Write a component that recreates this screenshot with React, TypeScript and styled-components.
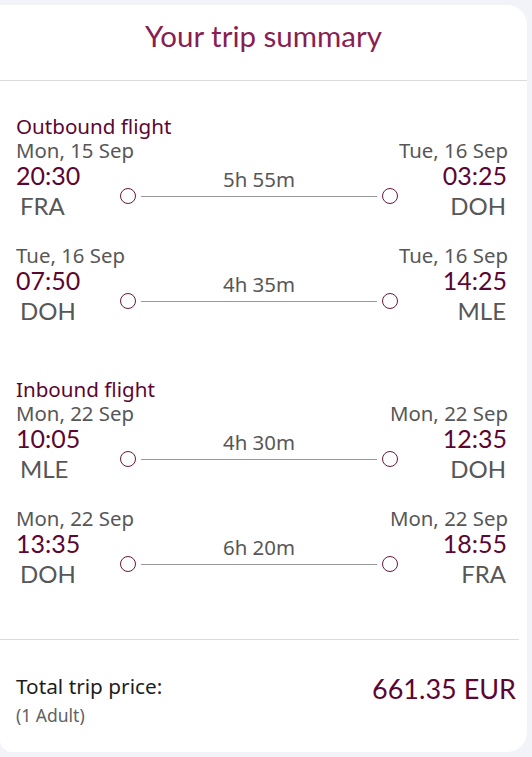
import React, { Fragment } from 'react';
import styled, { createGlobalStyle } from 'styled-components';

const GlobalStyle = createGlobalStyle`
  html, body {
    margin: 0;
    padding: 0;
    background: #f2f3f9;
  }
  body {
    font-family: "Noto Sans", "Open Sans", sans-serif;
  }
`;

const Card = styled.div`
  width: 527px;
  height: 747px;
  margin: 5px 5px 5px 0;
  background: #ffffff;
  border-radius: 0 20px 20px 12px;
  box-sizing: border-box;
  display: flex;
  flex-direction: column;
`;

const Header = styled.div`
  padding: 16px 0 29px;
  text-align: center;
  border-bottom: 1px solid #dcdcdc;
`;

const Title = styled.h1`
  margin: 0;
  font-family: "Lato", sans-serif;
  font-weight: 400;
  font-size: 29.5px;
  line-height: 30px;
  color: #8a1d53;
`;

const Flights = styled.div`
  padding: 34px 11px 48px 16px;
  border-bottom: 1px solid #dcdcdc;
  margin-right: 8px;
`;

const Direction = styled.div<{ $first?: boolean }>`
  margin-top: ${props => (props.$first ? '0' : '50px')};
`;

const DirectionLabel = styled.div`
  font-size: 20.6px;
  line-height: 26px;
  color: #5c0632;
  margin-top: -2px;
`;

const Segment = styled.div<{ $first?: boolean }>`
  margin-top: ${props => (props.$first ? '0' : '21px')};
`;

const DateRow = styled.div`
  display: flex;
  justify-content: space-between;
  font-size: 20.4px;
  line-height: 22px;
  color: #575757;
`;

const MainRow = styled.div`
  display: flex;
  align-items: flex-start;
`;

const Stop = styled.div<{ $right?: boolean }>`
  width: ${props => (props.$right ? '110px' : '104px')};
  display: flex;
  flex-direction: column;
  align-items: ${props => (props.$right ? 'flex-end' : 'flex-start')};
`;

const Time = styled.div<{ $right?: boolean }>`
  font-family: "Lato", sans-serif;
  font-size: 25px;
  line-height: 28px;
  color: #5c0632;
  padding-right: ${props => (props.$right ? '1px' : '0')};
`;

const Code = styled.div<{ $right?: boolean }>`
  font-family: "Lato", sans-serif;
  font-size: 24px;
  line-height: 34px;
  color: #575757;
  padding-left: ${props => (props.$right ? '0' : '4px')};
  padding-right: ${props => (props.$right ? '2px' : '0')};
`;

const Track = styled.div`
  flex: 1;
  margin-top: 10px;
  display: flex;
  flex-direction: column;
  align-items: center;
`;

const Duration = styled.div`
  font-size: 20.4px;
  line-height: 16px;
  color: #575757;
`;

const Line = styled.div`
  width: 100%;
  display: flex;
  align-items: center;
  height: 18px;
`;

const Dot = styled.div`
  width: 14px;
  height: 14px;
  border: 1.5px solid #6b173f;
  border-radius: 50%;
  background: #fff;
  flex: none;
`;

const Rule = styled.div`
  flex: 1;
  height: 1px;
  background: #999999;
  margin: 0 5px;
`;

const Total = styled.div`
  display: flex;
  justify-content: space-between;
  align-items: flex-start;
  padding: 34px 11px 0 16px;
`;

const TotalLabel = styled.div`
  font-size: 20.8px;
  line-height: 24px;
  color: #1e1e1e;
`;

const Pax = styled.div`
  font-size: 17.5px;
  line-height: 22px;
  color: #626262;
  margin-top: 6px;
`;

const Price = styled.div`
  font-family: "Lato", sans-serif;
  font-size: 27px;
  line-height: 30px;
  color: #5c0632;
`;

type Seg = {
  depDate: string;
  depTime: string;
  from: string;
  arrDate: string;
  arrTime: string;
  to: string;
  duration: string;
};

const Trips: { label: string; segments: Seg[] }[] = [
  {
    label: 'Outbound flight',
    segments: [
      { depDate: 'Mon, 15 Sep', depTime: '20:30', from: 'FRA', arrDate: 'Tue, 16 Sep', arrTime: '03:25', to: 'DOH', duration: '5h 55m' },
      { depDate: 'Tue, 16 Sep', depTime: '07:50', from: 'DOH', arrDate: 'Tue, 16 Sep', arrTime: '14:25', to: 'MLE', duration: '4h 35m' },
    ],
  },
  {
    label: 'Inbound flight',
    segments: [
      { depDate: 'Mon, 22 Sep', depTime: '10:05', from: 'MLE', arrDate: 'Mon, 22 Sep', arrTime: '12:35', to: 'DOH', duration: '4h 30m' },
      { depDate: 'Mon, 22 Sep', depTime: '13:35', from: 'DOH', arrDate: 'Mon, 22 Sep', arrTime: '18:55', to: 'FRA', duration: '6h 20m' },
    ],
  },
];

function App () {
  return (
    <Fragment>
      <GlobalStyle />
      <Card>
        <Header>
          <Title>Your trip summary</Title>
        </Header>
        <Flights>
          {Trips.map((trip, index)=>(
            <Direction key={index} $first={index === 0}>
              <DirectionLabel>{trip.label}</DirectionLabel>
              {trip.segments.map((seg, i)=>(
                <Segment key={i} $first={i === 0}>
                  <DateRow>
                    <span>{seg.depDate}</span>
                    <span>{seg.arrDate}</span>
                  </DateRow>
                  <MainRow>
                    <Stop>
                      <Time>{seg.depTime}</Time>
                      <Code>{seg.from}</Code>
                    </Stop>
                    <Track>
                      <Duration>{seg.duration}</Duration>
                      <Line>
                        <Dot />
                        <Rule />
                        <Dot />
                      </Line>
                    </Track>
                    <Stop $right>
                      <Time $right>{seg.arrTime}</Time>
                      <Code $right>{seg.to}</Code>
                    </Stop>
                  </MainRow>
                </Segment>
              ))}
            </Direction>
          ))}
        </Flights>
        <Total>
          <div>
            <TotalLabel>Total trip price:</TotalLabel>
            <Pax>(1 Adult)</Pax>
          </div>
          <Price>661.35 EUR</Price>
        </Total>
      </Card>
    </Fragment>
  );
}

export default App;
